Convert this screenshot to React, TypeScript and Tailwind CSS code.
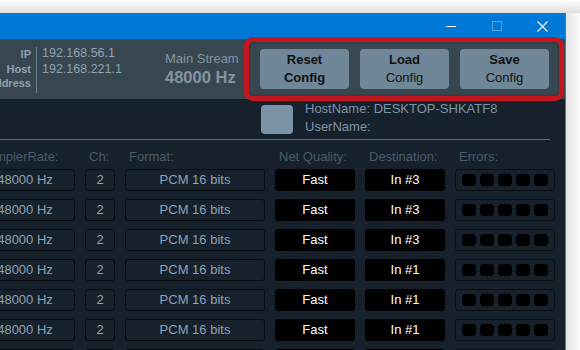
import React from "react";

const rows = [
  { dest: "In #3" },
  { dest: "In #3" },
  { dest: "In #3" },
  { dest: "In #1" },
  { dest: "In #1" },
  { dest: "In #1" },
  { dest: "In #1" },
];

function Row({ dest }: { dest: string }) {
  return (
    <div className="flex gap-[10px] h-[22px] shrink-0 text-[13px] leading-[20px]">
      <div className="ml-[-25px] w-[100px] shrink-0 border border-[#080d11] rounded-[3px] text-center text-[#8aa2b6]">48000 Hz</div>
      <div className="w-[30px] shrink-0 border border-[#080d11] rounded-[3px] text-center text-[#8aa2b6]">2</div>
      <div className="w-[140px] shrink-0 border border-[#080d11] rounded-[3px] text-center text-[#8aa2b6]">PCM 16 bits</div>
      <div className="w-[80px] shrink-0 bg-black rounded-[3px] text-center text-white leading-[22px]">Fast</div>
      <div className="w-[80px] shrink-0 bg-black rounded-[3px] text-center text-white leading-[22px]">{dest}</div>
      <div className="w-[100px] shrink-0 border border-[#0a1015] rounded-[3px] flex items-center justify-center gap-[4px]">
        <div className="w-[14px] h-[12px] bg-black rounded-[4px]" />
        <div className="w-[14px] h-[12px] bg-black rounded-[4px]" />
        <div className="w-[14px] h-[12px] bg-black rounded-[4px]" />
        <div className="w-[14px] h-[12px] bg-black rounded-[4px]" />
        <div className="w-[14px] h-[12px] bg-black rounded-[4px]" />
      </div>
    </div>
  );
}

export default function App() {
  return (
    <div className="w-[580px] h-[350px] overflow-hidden bg-white relative flex flex-col font-['Liberation_Sans',Arial,sans-serif]">
      <div className="h-[13px] shrink-0 bg-gradient-to-b from-white to-[#dedede]" />
      <div className="flex flex-1 min-h-0">
        <div className="w-[566px] shrink-0 border-r border-[#2a86d8] flex flex-col bg-[#16212b] overflow-hidden">
          {/* title bar */}
          <div className="h-[26px] shrink-0 bg-[#0078d7] flex justify-end items-center">
            <div className="w-[46px] h-full flex items-center justify-center">
              <svg width="10" height="10" viewBox="0 0 10 10"><line x1="0" y1="5.5" x2="10" y2="5.5" stroke="white" strokeWidth="1" /></svg>
            </div>
            <div className="w-[46px] h-full flex items-center justify-center">
              <svg width="10" height="10" viewBox="0 0 10 10"><rect x="0.5" y="0.5" width="9" height="9" fill="none" stroke="#4fa0e4" strokeWidth="1" /></svg>
            </div>
            <div className="w-[45px] h-full flex items-center justify-center">
              <svg width="11" height="11" viewBox="0 0 11 11"><path d="M0.5 0.5 L10.5 10.5 M10.5 0.5 L0.5 10.5" stroke="white" strokeWidth="1.1" /></svg>
            </div>
          </div>
          {/* header */}
          <div className="h-[60px] shrink-0 bg-[#37464f] flex items-start">
            <div className="ml-[-20px] w-[51px] mt-[8px] text-right text-[11px] font-bold leading-[14.5px] text-[#8ea2b2]">
              <div>IP</div>
              <div>Host</div>
              <div className="whitespace-nowrap">Address</div>
            </div>
            <div className="ml-[5px] mt-[8px] w-px h-[46px] bg-[#6d808d]" />
            <div className="ml-[5px] mt-[6px] w-[123px] text-[12.5px] leading-[16px] text-[#8ea3b4]">
              <div>192.168.56.1</div>
              <div>192.168.221.1</div>
            </div>
            <div className="w-[95px] mt-[11px] text-[#8294a1] leading-[18px]">
              <div className="text-[13px]">Main Stream</div>
              <div className="text-[16.5px] font-bold">48000 Hz</div>
            </div>
            <div className="mt-[10px] flex gap-[11px]">
              <div className="w-[89px] h-[40px] bg-[#6f8798] rounded-[4px] flex flex-col items-center justify-center text-[13px] leading-[18px] text-[#111] font-bold">
                <div>Reset</div>
                <div>Config</div>
              </div>
              <div className="w-[89px] h-[40px] bg-[#6f8798] rounded-[4px] flex flex-col items-center justify-center text-[13px] leading-[18px] text-[#111]">
                <div className="font-bold">Load</div>
                <div>Config</div>
              </div>
              <div className="w-[89px] h-[40px] bg-[#6f8798] rounded-[4px] flex flex-col items-center justify-center text-[13px] leading-[18px] text-[#111]">
                <div className="font-bold">Save</div>
                <div>Config</div>
              </div>
            </div>
          </div>
          {/* host row */}
          <div className="flex items-start pl-[261px] h-[40px] shrink-0">
            <div className="mt-[6px] w-[32px] h-[29px] bg-[#7b93a6] rounded-[4px]" />
            <div className="ml-[12px] mt-[1px] text-[13px] leading-[18px] text-[#7d94a6]">
              <div>HostName: DESKTOP-SHKATF8</div>
              <div>UserName:</div>
            </div>
          </div>
          <div className="w-[550px] h-px shrink-0 bg-[#5a6d7a]" />
          {/* column headers */}
          <div className="mt-[9px] flex gap-[10px] h-[16px] shrink-0 text-[13px] leading-[16px] text-[#4a5a66]">
            <div className="ml-[-25px] w-[100px] shrink-0 pl-[4px]">SamplerRate:</div>
            <div className="w-[30px] shrink-0 pl-[4px]">Ch:</div>
            <div className="w-[140px] shrink-0 pl-[4px]">Format:</div>
            <div className="w-[80px] shrink-0 pl-[4px] whitespace-nowrap">Net Quality:</div>
            <div className="w-[80px] shrink-0 pl-[4px]">Destination:</div>
            <div className="w-[100px] shrink-0 pl-[4px]">Errors:</div>
          </div>
          <div className="mt-[4px] flex flex-col gap-[8px]">
            {rows.map((r, i) => (
              <Row key={i} dest={r.dest} />
            ))}
          </div>
        </div>
        <div className="flex-1 bg-gradient-to-r from-[#e4e4e4] to-[#fbfbfb]" />
      </div>
      {/* annotation highlight */}
      <div className="absolute left-[244px] top-[37px] w-[320px] h-[64px] border-[5px] border-[#c3161f] rounded-[9px] shadow-[inset_0_0_3px_rgba(0,0,0,0.35)]" />
    </div>
  );
}
